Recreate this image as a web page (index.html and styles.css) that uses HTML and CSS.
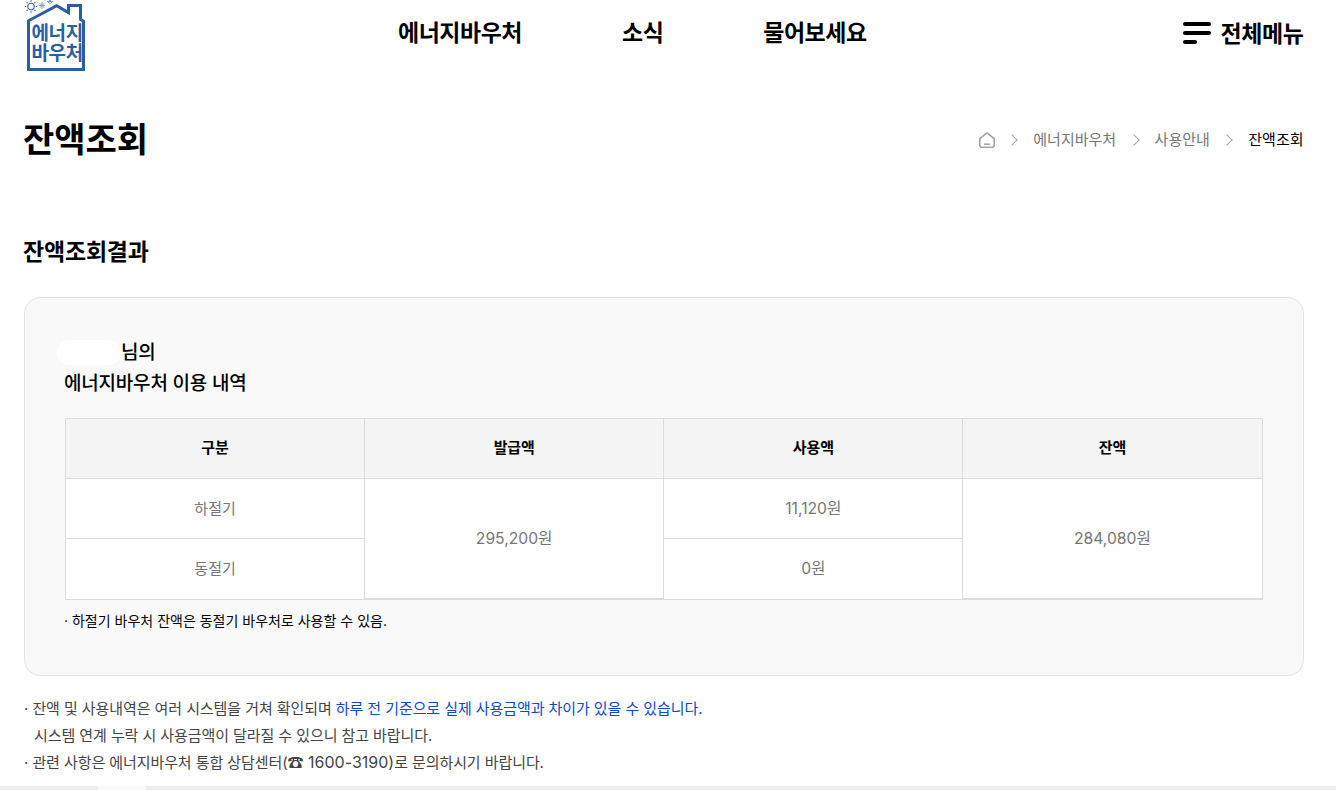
FILE: index.html
```html
<!DOCTYPE html>
<html lang="ko">
<head>
<meta charset="utf-8">
<title>잔액조회</title>
<link rel="stylesheet" href="styles.css">
</head>
<body>
<div class="page">
  <header class="header">
    <a class="logo" href="#">
      <svg class="logo-art" width="64" height="72" viewBox="0 0 64 72" aria-hidden="true">
        <path class="logo-house" d="M4.5 69.5V20.8L32.7 5.6 44.5 12.6V5.5H56.5V19.5L59.5 21.2V69.5Z"/>
        <g class="logo-sun">
          <circle cx="7" cy="6.5" r="3.2"/>
          <path d="M7 .3v1.4M7 11.3v1.4M.8 6.5h1.4M11.8 6.5h1.4M2.6 2.1l1 1M10.4 9.9l1 1M2.6 10.9l1-1M10.4 3.1l1-1"/>
        </g>
        <g class="logo-snow">
          <path d="M18 2v7M14.8 5.5h6.4M15.8 3.3l4.4 4.4M20.2 3.3l-4.4 4.4"/>
          <path d="M26 -1v5M23 1.5h6M24 -1l4 4M28 -1l-4 4"/>
        </g>
      </svg>
      <span class="logo-text"><span>에너지</span><span>바우처</span></span>
    </a>
    <nav class="nav">
      <a href="#">에너지바우처</a>
      <a href="#">소식</a>
      <a href="#">물어보세요</a>
    </nav>
    <a class="all-menu" href="#">
      <span class="burger"><i></i><i></i><i class="short"></i></span>
      <span>전체메뉴</span>
    </a>
  </header>

  <div class="title-row">
    <h1>잔액조회</h1>
    <ol class="crumbs">
      <li class="home">
        <svg width="16" height="16" viewBox="0 0 16 16" aria-hidden="true">
          <path d="M.8 6.6 8 .9l7.2 5.7v7a1.6 1.6 0 0 1-1.6 1.6H2.4a1.6 1.6 0 0 1-1.6-1.6Z"/>
          <path d="M5.2 12.2h5.6"/>
        </svg>
      </li>
      <li>에너지바우처</li>
      <li>사용안내</li>
      <li class="current">잔액조회</li>
    </ol>
  </div>

  <h2>잔액조회결과</h2>

  <section class="card">
    <p class="who"><span class="mask"></span>님의<br>에너지바우처 이용 내역</p>
    <table class="grid">
      <colgroup><col class="c"><col class="c"><col class="c"><col class="c"></colgroup>
      <thead>
        <tr><th>구분</th><th>발급액</th><th>사용액</th><th>잔액</th></tr>
      </thead>
      <tbody>
        <tr><td>하절기</td><td class="num span" rowspan="2">295,200원</td><td class="num">11,120원</td><td class="num span" rowspan="2">284,080원</td></tr>
        <tr class="last"><td>동절기</td><td class="num">0원</td></tr>
      </tbody>
    </table>
    <p class="note">· 하절기 바우처 잔액은 동절기 바우처로 사용할 수 있음.</p>
  </section>

  <ul class="info">
    <li>· 잔액 및 사용내역은 여러 시스템을 거쳐 확인되며 <em>하루 전 기준으로 실제 사용금액과 차이가 있을 수 있습니다.</em></li>
    <li class="indent">시스템 연계 누락 시 사용금액이 달라질 수 있으니 참고 바랍니다.</li>
    <li>· 관련 사항은 에너지바우처 통합 상담센터(<span class="tel">☎ 1600-3190)</span>로 문의하시기 바랍니다.</li>
  </ul>

  <div class="strip"><div class="thumb"></div></div>
</div>
</body>
</html>
```
FILE: styles.css
```css
* { box-sizing: border-box; }
html, body { margin: 0; height: 790px; overflow: hidden; background: #fff; }
body { font-family: Inter, "Noto Sans CJK KR", sans-serif; color: #000; }
a { color: inherit; text-decoration: none; }
.page { height: 790px; display: flex; flex-direction: column; padding: 0 32px 0 24px; }

.header { height: 72px; display: flex; align-items: flex-start; position: relative; }
.logo { position: relative; display: block; width: 64px; height: 72px; margin-right: 310px; color: #2a5ea4; }
.logo-art { display: block; }
.logo-house { fill: none; stroke: #2a5ea4; stroke-width: 3; }
.logo-sun path, .logo-sun circle { fill: none; stroke: #2a5ea4; stroke-width: 1.1; }
.logo-snow path { fill: none; stroke: #7fa0cc; stroke-width: 1; }
.logo-text { position: absolute; left: 7.5px; top: 24px; display: flex; flex-direction: column; font-size: 19px; line-height: 20px; font-weight: 600; letter-spacing: -.4px; white-space: nowrap; }

.nav { display: flex; gap: 100px; padding-top: 17px; font-size: 23px; line-height: 32px; font-weight: 700; letter-spacing: -.5px; }
.all-menu { margin-left: auto; margin-right: .5px; display: flex; align-items: center; gap: 9px; margin-top: 18px; font-size: 23px; line-height: 32px; font-weight: 700; letter-spacing: -.4px; }
.burger { width: 28px; display: flex; flex-direction: column; gap: 5px; margin-top: -3px; }
.burger i { display: block; height: 4px; background: #000; border-radius: 2px; }
.burger i.short { width: 14px; }

.title-row { display: flex; justify-content: space-between; align-items: center; margin-top: 40px; height: 54px; }
h1 { margin: 0 0 0 -1px; font-size: 34px; line-height: 56px; height: 54px; font-weight: 700; letter-spacing: -.05px; }
.crumbs { list-style: none; margin: 2px 0 0; padding: 0 .5px 0 0; display: flex; align-items: center; font-size: 15px; line-height: 20px; color: #767676; }
.crumbs li { display: flex; align-items: center; }
.crumbs li + li::before { content: ""; width: 7px; height: 7px; border-top: 1.5px solid #a5a5a5; border-right: 1.5px solid #a5a5a5; transform: rotate(45deg); margin: 0 17px 0 13.5px; }
.crumbs .current { color: #000; }
.home svg { display: block; }
.home path { fill: none; stroke: #a2a2a2; stroke-width: 1.6; }

h2 { margin: 68px 0 0 -1px; font-size: 23px; line-height: 36px; font-weight: 700; letter-spacing: -.2px; }

.card { margin-top: 27px; height: 379px; border: 1px solid #e2e2e2; border-radius: 16px; background: #f9f9f9; padding: 39px 40px 0; }
.who { margin: 0 0 0 -1px; font-size: 19px; line-height: 31px; font-weight: 500; letter-spacing: -.2px; }
.mask { display: inline-block; vertical-align: -6px; width: 64px; height: 25px; margin-left: -7px; background: #fff; border-radius: 12px; }

.grid { width: 1197.5px; margin-top: 19px; border-collapse: collapse; table-layout: fixed; background: #fff; }
.grid .c { width: 25%; }
.grid th, .grid td { height: 60px; padding: 0 0 2px; border: 1px solid #dcdcdc; text-align: center; font-size: 15px; }
.grid th { background: #f4f4f4; font-weight: 600; color: #000; letter-spacing: -.1px; padding-bottom: 4px; }
.grid td { color: #767676; font-weight: 400; }
.grid .last td { height: 61px; padding-bottom: 4px; }
.grid td.num { font-size: 15.7px; }
.grid td.span { box-shadow: inset 0 -1px 0 #dcdcdc; padding-bottom: 4px; }

.note { margin: 10px 0 0 -1px; font-size: 14px; line-height: 22px; font-weight: 400; color: #000; }

.info { list-style: none; margin: 19px 0 0; padding: 0; font-size: 15px; line-height: 27px; color: #444; letter-spacing: -.08px; }
.info em { font-style: normal; color: #0d49c9; }
.info .indent { padding-left: 10px; }
.info .tel { font-size: 16px; letter-spacing: 0; }

.strip { margin: auto -32px 0 -24px; height: 4px; background: #eeeeee; flex: none; }
.thumb { margin-left: 98px; width: 48px; height: 4px; background: #f8f8f8; }
```
